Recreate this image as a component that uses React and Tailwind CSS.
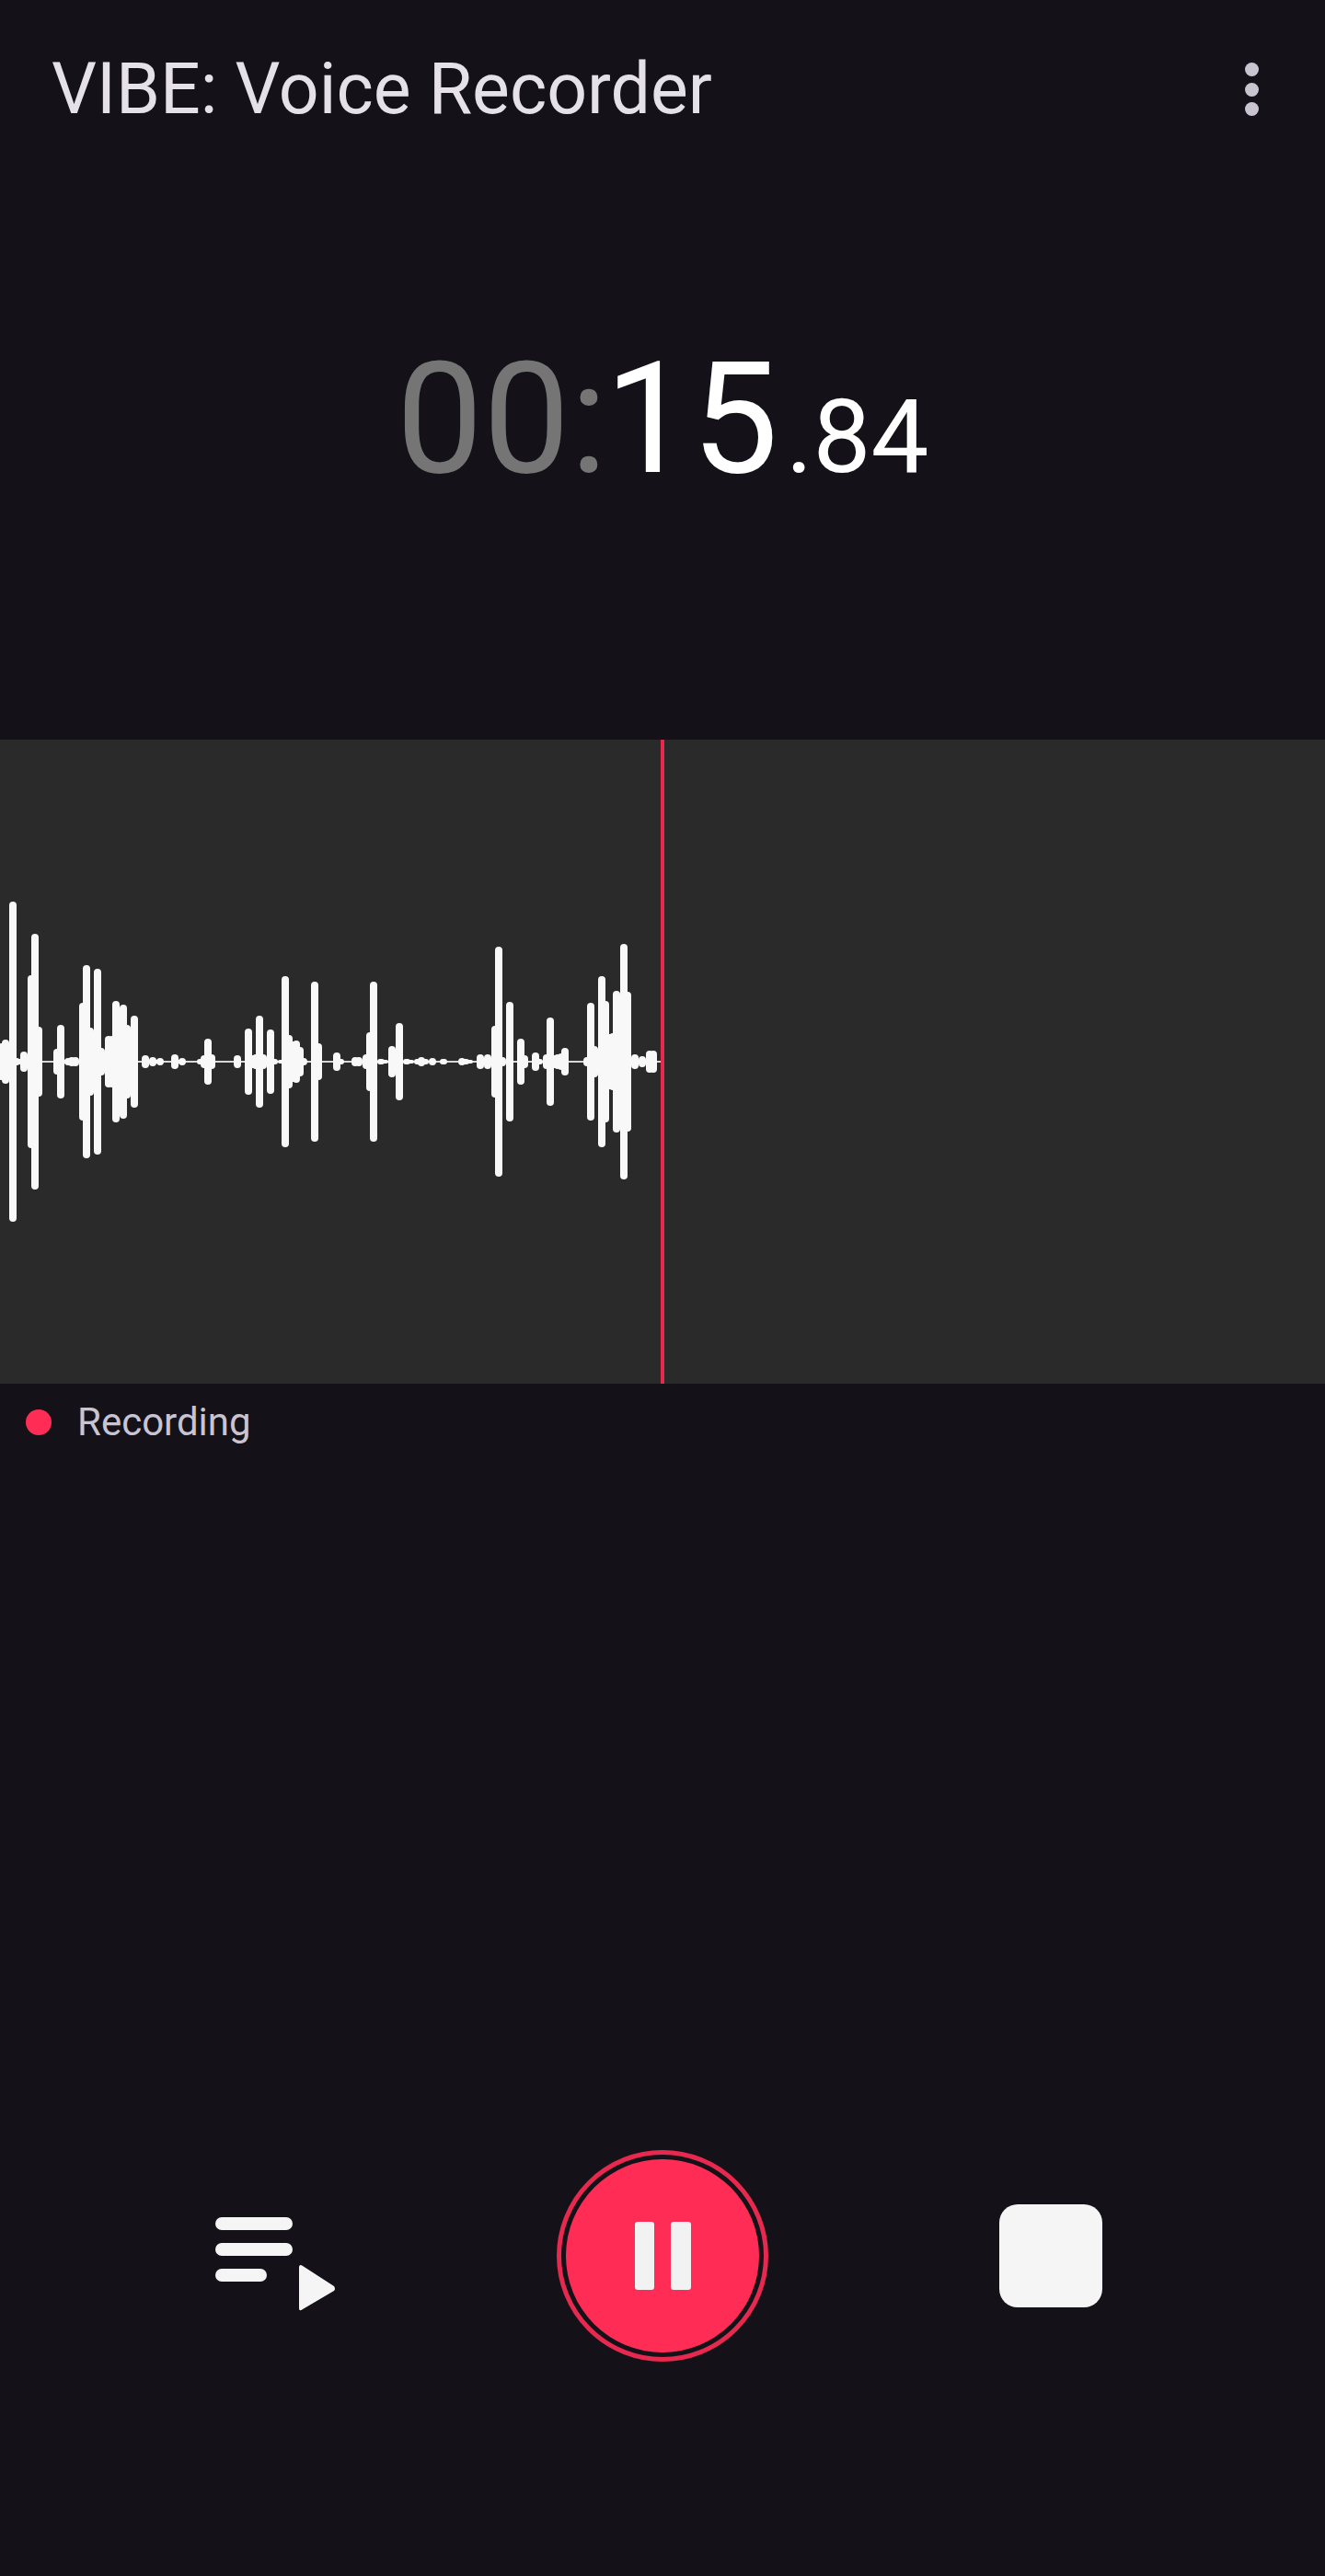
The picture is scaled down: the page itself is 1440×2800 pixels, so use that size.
const bars = [
  [2, 20], [6, 24], [10, 20], [14, 174], [18, 4], [22, 3], [26, 11], [30, 3], [34, 94], [38, 139], [42, 38],
  [62, 14], [66, 40], [70, 2], [74, 4], [78, 5], [82, 5], [90, 64], [94, 105], [98, 37], [102, 20], [106, 101],
  [110, 15], [114, 10], [118, 28], [122, 28], [126, 66], [130, 30], [134, 62], [138, 40], [142, 30], [146, 50],
  [158, 7], [162, 2], [166, 5], [170, 2], [174, 4], [190, 8], [194, 2], [198, 4], [218, 3], [222, 7], [226, 25], [230, 8],
  [258, 7], [270, 36], [274, 7], [278, 8], [282, 50], [286, 8], [290, 3], [294, 35], [298, 3],
  [306, 2], [310, 93], [314, 29], [318, 22], [322, 23], [326, 16], [330, 4], [342, 87], [346, 20],
  [366, 10], [370, 3], [386, 5], [390, 5], [398, 8], [402, 32], [406, 87], [414, 3], [418, 2],
  [426, 17], [430, 10], [434, 42], [442, 3], [446, 2], [454, 3], [458, 5], [462, 3], [470, 4], [482, 3],
  [502, 4], [506, 3], [510, 2], [522, 8], [530, 8], [538, 39], [542, 125], [546, 5], [554, 65], [566, 25], [570, 7],
  [582, 10], [586, 3], [594, 8], [598, 48], [602, 7], [606, 8], [610, 9], [614, 15],
  [638, 5], [642, 64], [646, 17], [650, 13], [654, 93], [658, 66], [662, 30], [666, 31], [670, 77], [674, 40], [678, 128], [682, 76],
  [690, 8], [698, 6], [706, 12], [710, 12],
];

function Waveform() {
  return (
    <svg width="718" height="700" viewBox="0 0 718 700" className="block">
      <rect x="0" y="349" width="718" height="2" fill="#d8d8d8" />
      {bars.map(([x, h]) => (
        <rect key={x} x={x - 4} y={350 - h} width="8" height={h * 2} rx={Math.min(4, h)} fill="#f8f8f8" />
      ))}
    </svg>
  );
}

export default function App() {
  return (
    <div className="flex flex-col w-[1440px] h-[2800px] bg-[#141218] font-['Roboto',sans-serif] overflow-hidden">
      <div className="flex items-center justify-between h-[194px] pl-[56px] pr-[72px]">
        <h1 className="text-[77px] leading-none font-normal text-[#e6e0e9]">VIBE: Voice Recorder</h1>
        <div className="flex flex-col gap-[6.5px]">
          <span className="w-[15px] h-[15px] rounded-full bg-[#cac4d0]"></span>
          <span className="w-[15px] h-[15px] rounded-full bg-[#cac4d0]"></span>
          <span className="w-[15px] h-[15px] rounded-full bg-[#cac4d0]"></span>
        </div>
      </div>

      <div className="flex justify-center items-baseline h-[610px] pt-[178px] font-normal leading-none">
        <span className="text-[168px] text-[#757575]">00:</span>
        <span className="ml-[-3px] text-[168px] text-white">15</span>
        <span className="ml-[8px] text-[112px] text-white">.84</span>
      </div>

      <div className="relative h-[700px] bg-[#2a2a2a]">
        <Waveform />
        <div className="absolute top-0 bottom-0 left-[718px] w-[4px] bg-[#e8294f]"></div>
      </div>

      <div className="flex items-center gap-[28px] h-[84px] pl-[28px]">
        <span className="w-[28px] h-[28px] rounded-full bg-[#ff2d55]"></span>
        <span className="text-[42px] leading-none text-[#cac4d0]">Recording</span>
      </div>

      <div className="flex items-center mt-[749px] pl-[234px]">
        <svg width="131" height="102" viewBox="0 0 131 102" className="block mt-[18px]">
          <rect x="0" y="0" width="84" height="14" rx="7" fill="#f5f5f5" />
          <rect x="0" y="28" width="84" height="14" rx="7" fill="#f5f5f5" />
          <rect x="0" y="56" width="56" height="14" rx="7" fill="#f5f5f5" />
          <path d="M91 55 L91 99 Q91 103 95 100 L129 80 Q131 78 129 75 L95 53 Q91 50 91 55 Z" fill="#f5f5f5" />
        </svg>
        <div className="flex items-center justify-center w-[230px] h-[230px] ml-[240px] rounded-full border-[5px] border-[#e8294f]">
          <div className="flex items-center justify-center gap-[18px] w-[210px] h-[210px] rounded-full bg-[#ff2d55]">
            <span className="w-[21px] h-[74px] rounded-[3px] bg-[#f2f2f2]"></span>
            <span className="w-[22px] h-[74px] rounded-[3px] bg-[#f2f2f2]"></span>
          </div>
        </div>
        <div className="w-[112px] h-[112px] ml-[251px] rounded-[20px] bg-[#f5f5f5]"></div>
      </div>
    </div>
  );
}
